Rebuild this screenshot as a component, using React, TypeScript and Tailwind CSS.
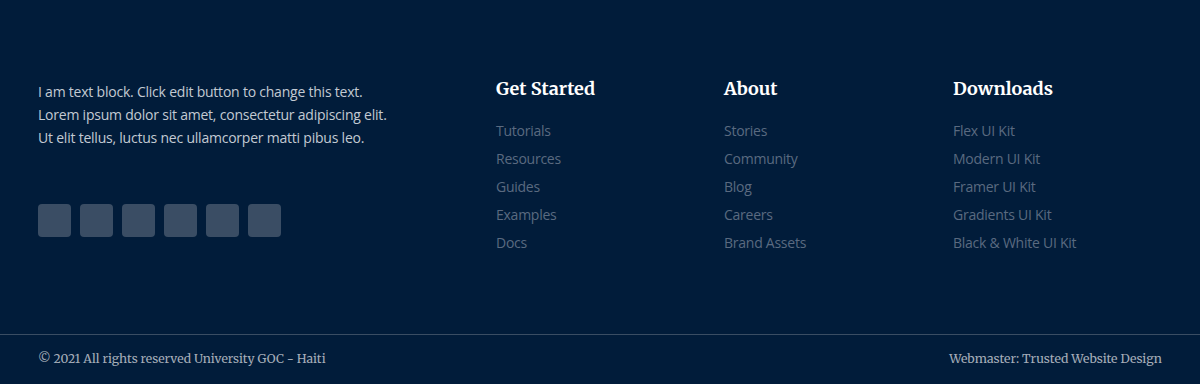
import React from "react";

const columns = [
  { title: "Get Started", w: "w-[228px]", links: ["Tutorials", "Resources", "Guides", "Examples", "Docs"] },
  { title: "About", w: "w-[229px]", links: ["Stories", "Community", "Blog", "Careers", "Brand Assets"] },
  { title: "Downloads", w: "w-[209px]", links: ["Flex UI Kit", "Modern UI Kit", "Framer UI Kit", "Gradients UI Kit", "Black & White UI Kit"] },
];

const serif = "font-['Merriweather','DejaVu_Serif',serif]";

const App = () => {
  return (
    <footer className="w-full h-[384px] bg-[#011c3a] font-['Open_Sans',sans-serif] flex flex-col">
      <div className="flex px-[38px] pt-[77px] h-[334px]">
        <div className="w-[458px] shrink-0">
          <p className="mt-[3px] text-[14px] leading-[23px] text-[#c3cad3] tracking-[-0.22px]">
            I am text block. Click edit button to change this text.
            <br />
            Lorem ipsum dolor sit amet, consectetur adipiscing elit.
            <br />
            Ut elit tellus, luctus nec ullamcorper matti pibus leo.
          </p>
          <div className="flex gap-[9px] mt-[55px]">
            {[0, 1, 2, 3, 4, 5].map((i) => (
              <a key={i} href="#" className="w-[33px] h-[33px] rounded-[4px] bg-[#3a4d64]" />
            ))}
          </div>
        </div>
        {columns.map((col) => (
          <div key={col.title} className={`${col.w} shrink-0`}>
            <h4 className={`${serif} text-[18px] leading-[24px] font-bold text-white`}>{col.title}</h4>
            <ul className="mt-[16px] flex flex-col">
              {col.links.map((l) => (
                <li key={l} className="text-[14px] leading-[28px] tracking-[-0.25px] text-[#5a6a80]">
                  {l}
                </li>
              ))}
            </ul>
          </div>
        ))}
      </div>
      <div className="border-t border-[#3a4d63] flex-1 flex items-center justify-between px-[38px]">
        <span className={`${serif} text-[12.2px] text-[#a5adb8]`}>© 2021 All rights reserved University GOC - Haiti</span>
        <span className={`${serif} text-[12.3px] text-[#a5adb8]`}>Webmaster: Trusted Website Design</span>
      </div>
    </footer>
  );
};

export default App;
